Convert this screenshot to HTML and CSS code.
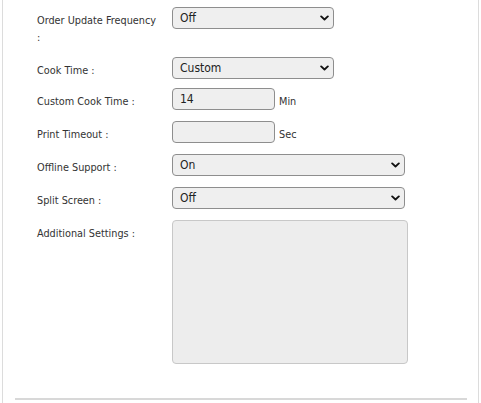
FILE: index.html
```html
<!DOCTYPE html>
<html>
<head>
<meta charset="utf-8">
<link rel="stylesheet" href="styles.css">
</head>
<body>
<div class="panel">
  <div class="form">
    <div class="row">
      <label class="lbl">Order Update Frequency :</label>
      <div class="sel sel-short"><span class="val">Off</span><svg class="chev" viewBox="0 0 10 6" width="9" height="6"><path d="M1.3 1.2 L5 4.6 L8.7 1.2" /></svg></div>
    </div>
    <div class="row row-tight">
      <label class="lbl">Cook Time :</label>
      <div class="sel sel-short"><span class="val">Custom</span><svg class="chev" viewBox="0 0 10 6" width="9" height="6"><path d="M1.3 1.2 L5 4.6 L8.7 1.2" /></svg></div>
    </div>
    <div class="row">
      <label class="lbl">Custom Cook Time :</label>
      <div class="inp"><span class="val">14</span></div>
      <span class="unit">Min</span>
    </div>
    <div class="row">
      <label class="lbl">Print Timeout :</label>
      <div class="inp"></div>
      <span class="unit">Sec</span>
    </div>
    <div class="row">
      <label class="lbl">Offline Support :</label>
      <div class="sel sel-long"><span class="val">On</span><svg class="chev" viewBox="0 0 10 6" width="9" height="6"><path d="M1.3 1.2 L5 4.6 L8.7 1.2" /></svg></div>
    </div>
    <div class="row">
      <label class="lbl">Split Screen :</label>
      <div class="sel sel-long"><span class="val">Off</span><svg class="chev" viewBox="0 0 10 6" width="9" height="6"><path d="M1.3 1.2 L5 4.6 L8.7 1.2" /></svg></div>
    </div>
    <div class="row">
      <label class="lbl">Additional Settings :</label>
      <div class="area"></div>
    </div>
  </div>
  <div class="rule"></div>
</div>
</body>
</html>
```

FILE: styles.css
```css
html, body {
  margin: 0;
  padding: 0;
  background: #fff;
}
body {
  font-family: "DejaVu Sans Condensed", "DejaVu Sans", sans-serif;
  font-size: 10.8px;
  color: #333;
  overflow: hidden;
  height: 403px;
}
.panel {
  margin-left: 2px;
  width: 477px;
  height: 403px;
  border-left: 1px solid #dcdcdc;
  border-right: 1px solid #dcdcdc;
  padding: 7px 11px 0 12px;
  box-sizing: border-box;
}
.form {
  padding-left: 22px;
}
.row {
  display: flex;
  align-items: flex-start;
  margin-bottom: 11px;
}
.row-tight {
  margin-bottom: 9px;
}
.lbl {
  width: 124px;
  margin-right: 11px;
  padding-top: 5px;
  line-height: 17px;
  flex-shrink: 0;
}
.sel, .inp, .area {
  box-sizing: border-box;
  height: 22px;
  background: #efefef;
  border: 1px solid #8e8e8e;
  border-radius: 4px;
  display: flex;
  align-items: center;
  padding-left: 7px;
  position: relative;
  font-size: 12px;
  color: #222;
}
.sel-short { width: 162px; }
.sel-long { width: 233px; }
.inp { width: 103px; }
.unit {
  margin-left: 4px;
  padding-top: 5px;
  line-height: 17px;
}
.area {
  width: 236px;
  height: 144px;
  background: #ededed;
  border-color: #c8c8c8;
}
.chev {
  position: absolute;
  right: 4px;
  top: 7px;
  fill: none;
  stroke: #111;
  stroke-width: 2.1;
  stroke-linecap: round;
  stroke-linejoin: round;
}
.rule {
  height: 2px;
  background: #d8d8d8;
  margin-top: 34px;
}
```
